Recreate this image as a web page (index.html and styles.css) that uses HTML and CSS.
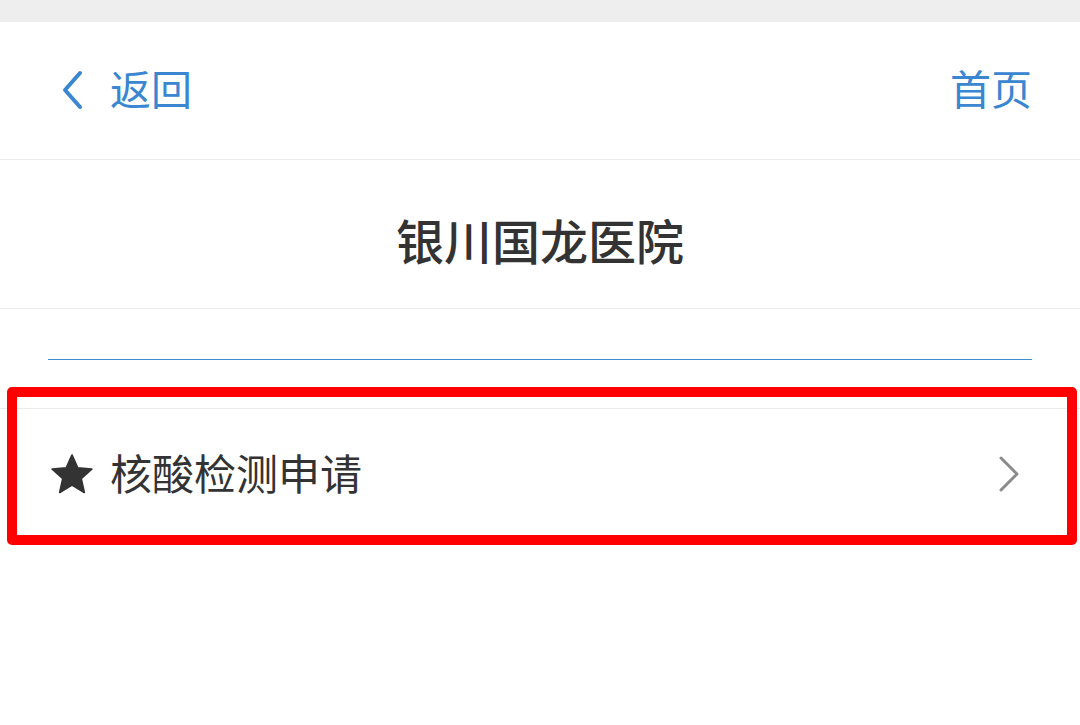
FILE: index.html
```html
<!DOCTYPE html>
<html lang="zh">
<head>
<meta charset="utf-8">
<link rel="stylesheet" href="styles.css">
</head>
<body>
<div class="statusbar"></div>
<header class="nav">
  <a class="back">
    <svg class="back-icon" width="24" height="40" viewBox="0 0 24 40"><path d="M20 3 L5 20 L20 37" fill="none" stroke="#3a86d0" stroke-width="4" stroke-linecap="round" stroke-linejoin="round"/></svg>
    <span class="nav-text">返回</span>
  </a>
  <a class="nav-text home">首页</a>
</header>
<section class="title-bar">
  <h1 class="title">银川国龙医院</h1>
</section>
<div class="spacer">
  <div class="blue-line"></div>
</div>
<div class="list">
  <div class="row">
    <svg class="star" width="44" height="42" viewBox="0 0 24 23"><path d="M12 0.6 L15.1 7.6 L22.8 8.3 L17 13.4 L18.7 21 L12 17 L5.3 21 L7 13.4 L1.2 8.3 L8.9 7.6 Z" fill="#333333" stroke="#333333" stroke-width="1" stroke-linejoin="round"/></svg>
    <span class="row-text">核酸检测申请</span>
    <svg class="chev" width="22" height="38" viewBox="0 0 22 38"><path d="M3 3 L19 19 L3 35" fill="none" stroke="#8a8a8a" stroke-width="3" stroke-linecap="round" stroke-linejoin="round"/></svg>
  </div>
  <div class="highlight"></div>
</div>
</body>
</html>
```
FILE: styles.css
```css
html, body {
  margin: 0;
  padding: 0;
  background: #ffffff;
}
body {
  width: 1080px;
  height: 725px;
  overflow: hidden;
  font-family: "Noto Sans CJK SC", "Noto Sans", sans-serif;
}
.statusbar {
  height: 22px;
  background: #eeeeee;
}
.nav {
  height: 131px;
  border-bottom: 1px solid #ececec;
  display: flex;
  align-items: center;
  justify-content: space-between;
  padding: 0 48px 6px 60px;
}
.back {
  display: flex;
  align-items: center;
  gap: 26px;
}
.back-icon {
  display: block;
  margin-top: 4px;
}
.nav-text {
  color: #3a86d0;
  font-size: 41px;
  line-height: 1;
}
.title-bar {
  height: 149px;
  border-bottom: 1px solid #ececec;
  display: flex;
  align-items: center;
  justify-content: center;
  box-sizing: border-box;
  padding-top: 10px;
}
.title {
  margin: 0;
  font-size: 48px;
  font-weight: 500;
  color: #333333;
  line-height: 1;
}
.spacer {
  height: 99px;
  box-sizing: border-box;
  padding: 50px 48px 0 48px;
}
.blue-line {
  height: 1px;
  background: #3d8fd0;
}
.list {
  position: relative;
  border-top: 1px solid #ececec;
}
.row {
  height: 130px;
  display: flex;
  align-items: center;
  padding: 0 60px 0 50px;
}
.star {
  display: block;
  flex: none;
  margin-top: 2px;
}
.row-text {
  margin-left: 16px;
  font-size: 42px;
  color: #333333;
  line-height: 1;
  flex: 1;
  margin-bottom: 4px;
}
.chev {
  display: block;
  flex: none;
}
.highlight {
  position: absolute;
  left: 7px;
  top: -22px;
  width: 1070px;
  height: 158px;
  box-sizing: border-box;
  border: 10px solid #ff0000;
  border-radius: 5px;
}
```
